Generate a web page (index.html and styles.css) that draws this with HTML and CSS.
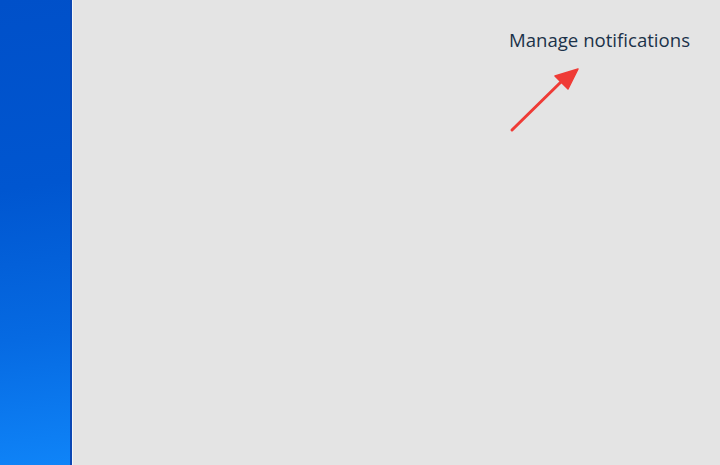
FILE: index.html
```html
<!DOCTYPE html>
<html>
<head>
<meta charset="utf-8">
<link rel="stylesheet" href="styles.css">
</head>
<body>
<div class="screen">
  <div class="desktop"></div>
  <div class="panel">
    <div class="header">
      <a class="manage">Manage notifications</a>
    </div>
    <svg class="arrow" width="720" height="465" viewBox="0 0 720 465">
      <line x1="512" y1="130" x2="563" y2="80" stroke="#ef3b36" stroke-width="3" stroke-linecap="round"/>
      <polygon points="578,69 555,76 568,89" fill="#ef3b36" stroke="#ef3b36" stroke-width="1.5" stroke-linejoin="round"/>
    </svg>
  </div>
</div>
</body>
</html>
```
FILE: styles.css
```css
html, body {
  margin: 0;
  padding: 0;
  width: 720px;
  height: 465px;
  overflow: hidden;
}
.screen {
  display: flex;
  width: 720px;
  height: 465px;
  position: relative;
}
.desktop {
  width: 70px;
  flex: none;
  background: linear-gradient(172deg, #0050c9 0%, #0056d0 40%, #066ae2 72%, #0f84f8 100%);
  border-right: 2px solid #0a47b4;
}
.panel {
  flex: 1;
  background: #e4e4e4;
  border-left: 1px solid #f4f6f8;
}
.header {
  display: flex;
  justify-content: flex-end;
  padding: 27px 30px 0 0;
}
.manage {
  font-family: "Open Sans", "Noto Sans", sans-serif;
  font-size: 18.6px;
  color: #1b3249;
  line-height: 26px;
}
.arrow {
  position: absolute;
  left: 0;
  top: 0;
}
```
